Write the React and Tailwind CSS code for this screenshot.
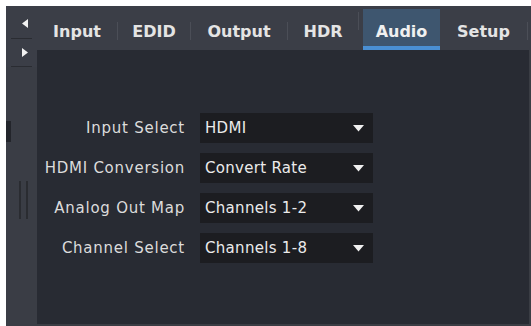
const tabs = [
  { name: 'Input', w: 'w-[80px]' },
  { name: 'EDID', w: 'w-[72px]' },
  { name: 'Output', w: 'w-[96px]' },
  { name: 'HDR', w: 'w-[70px]' },
]

const rows = [
  { label: 'Input Select', value: 'HDMI' },
  { label: 'HDMI Conversion', value: 'Convert Rate' },
  { label: 'Analog Out Map', value: 'Channels 1-2' },
  { label: 'Channel Select', value: 'Channels 1-8' },
]

function Sep() {
  return <div className="w-px h-[18px] mt-[6px] bg-[#4b4e57]" />
}

function Select({ value }) {
  return (
    <div className="w-[173px] h-[30px] bg-[#1c1d21] flex items-center justify-between pl-[5px] pr-[9px]">
      <span className="text-[15px] text-[#ebebeb] tracking-[0.3px]">{value}</span>
      <svg width="11" height="7" viewBox="0 0 11 7">
        <path d="M0 0 H11 L5.5 6.5 Z" fill="#f0f0f0" />
      </svg>
    </div>
  )
}

export default function App() {
  return (
    <div
      className="w-[531px] h-[326px] bg-white pt-[6px] pl-[6px] overflow-hidden"
      style={{ fontFamily: '"DejaVu Sans", sans-serif' }}
    >
      <div className="flex h-[320px] w-[525px]">
        {/* left strip */}
        <div className="w-[31px] shrink-0 bg-[#3b3e47] flex flex-col">
          <div className="h-[32px] flex items-center justify-center pl-[6px] pt-[2px]">
            <svg width="6" height="9" viewBox="0 0 6 9">
              <path d="M6 0 V9 L0 4.5 Z" fill="#f2f2f2" />
            </svg>
          </div>
          <div className="h-px mx-[5px] bg-[#2a2c32]" />
          <div className="h-[27px] flex items-center justify-center pl-[6px]">
            <svg width="6" height="9" viewBox="0 0 6 9">
              <path d="M0 0 V9 L6 4.5 Z" fill="#f2f2f2" />
            </svg>
          </div>
          <div className="h-px mx-[5px] bg-[#2a2c32]" />
          <div className="flex-1 relative bg-[#3a3d45]">
            <div className="absolute left-0 top-[54px] w-[5px] h-[21px] bg-[#23252b]" />
            <div className="absolute left-[13px] top-[114px] w-[2px] h-[38px] bg-[#2a2c31]" />
            <div className="absolute left-[20px] top-[114px] w-[2px] h-[38px] bg-[#2a2c31]" />
          </div>
        </div>

        {/* main */}
        <div className="flex-1 flex flex-col">
          <div className="h-[44px] bg-[#3b3e47] flex items-stretch">
            {tabs.map((t, i) => (
              <div key={t.name} className="flex items-center">
                <div className={`${t.w} flex items-center justify-center pt-[7px] text-[16px] font-bold text-[#e4e4e4]`}>
                  {t.name}
                </div>
                {i < 3 && <Sep />}
              </div>
            ))}
            <Sep />
            <div className="ml-[4px] mt-[3px] w-[77px] bg-[#3e566f] border-b-4 border-[#4a90d4] flex items-center justify-center pt-[8px] text-[16px] font-bold text-[#f0f0f0]">
              Audio
            </div>
            <div className="w-[87px] flex items-center justify-center pt-[7px] text-[16px] font-bold text-[#e4e4e4]">
              Setup
            </div>
            <div className="flex items-center">
              <Sep />
            </div>
          </div>

          <div className="flex-1 bg-[#282b33] border-r-2 border-b-2 border-[#3a3d44] pt-[63px]">
            <div className="flex flex-col gap-[10px]">
              {rows.map((r) => (
                <div key={r.label} className="flex items-center">
                  <div className="w-[148px] text-right text-[15px] text-[#dcdcdc] tracking-[0.75px]">{r.label}</div>
                  <div className="ml-[15px]">
                    <Select value={r.value} />
                  </div>
                </div>
              ))}
            </div>
          </div>
        </div>
      </div>
    </div>
  )
}
